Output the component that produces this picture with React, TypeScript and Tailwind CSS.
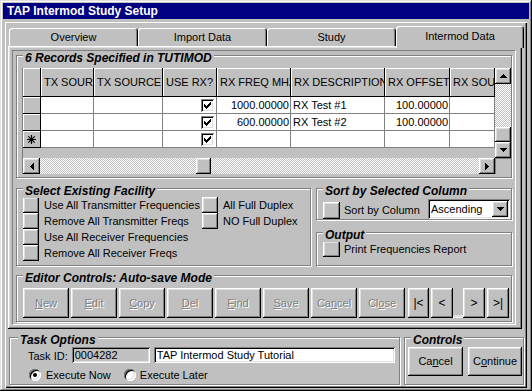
import React from "react";

const raised =
  "shadow-[inset_-1px_-1px_#000,inset_1px_1px_#fff,inset_-2px_-2px_#808080,inset_2px_2px_#dfdfdf]";
const sunken =
  "shadow-[inset_1px_1px_#808080,inset_-1px_-1px_#fff,inset_2px_2px_#000,inset_-2px_-2px_#dfdfdf]";
const dither =
  "bg-[repeating-conic-gradient(#fff_0_25%,#c0c0c0_0_50%)] bg-[length:2px_2px]";

function Arrow({ dir }: { dir: "up" | "down" | "left" | "right" }) {
  const d = {
    up: "M3 0h1v1h-1z M2 1h3v1h-3z M1 2h5v1h-5z M0 3h7v1h-7z",
    down: "M0 0h7v1h-7z M1 1h5v1h-5z M2 2h3v1h-3z M3 3h1v1h-1z",
    left: "M3 0h1v7h-1z M2 1h1v5h-1z M1 2h1v3h-1z M0 3h1v1h-1z",
    right: "M0 0h1v7h-1z M1 1h1v5h-1z M2 2h1v3h-1z M3 3h1v1h-1z",
  }[dir];
  const vert = dir === "up" || dir === "down";
  return (
    <svg
      width={vert ? 7 : 4}
      height={vert ? 4 : 7}
      viewBox={vert ? "0 0 7 4" : "0 0 4 7"}
      shapeRendering="crispEdges"
    >
      <path d={d} fill="#000" />
    </svg>
  );
}

function Check() {
  return (
    <div className={`w-[13px] h-[13px] bg-white flex items-center justify-center ${sunken}`}>
      <svg width="7" height="7" viewBox="0 0 7 7" shapeRendering="crispEdges">
        <path
          d="M6 0h1v1h-1z M5 1h2v1h-2z M0 2h1v1h-1z M4 2h3v1h-3z M0 3h2v1h-2z M3 3h3v1h-3z M0 4h5v1h-5z M1 5h3v1h-3z M2 6h1v1h-1z"
          fill="#000"
        />
      </svg>
    </div>
  );
}

function Group({
  title,
  className = "",
  titleLeft = "left-[6px]",
  children,
}: {
  title: string;
  className?: string;
  titleLeft?: string;
  children?: React.ReactNode;
}) {
  return (
    <div
      className={`relative shrink-0 border border-[#808080] shadow-[inset_1px_1px_#fff,1px_1px_#fff] ${className}`}
    >
      <span
        className={`absolute -top-[5px] ${titleLeft} bg-[#c0c0c0] px-[2px] text-[12px] leading-[14px] font-bold italic whitespace-nowrap`}
      >
        {title}
      </span>
      {children}
    </div>
  );
}

function SqBtn({ label }: { label: string }) {
  return (
    <div className="flex items-center h-[16px]">
      <div className={`w-[16px] h-[16px] shrink-0 ${raised}`} />
      <span className="ml-[5px] whitespace-nowrap">{label}</span>
    </div>
  );
}

function DataGrid() {
  const heads = ["TX SOUR", "TX SOURCE", "USE RX?", "RX FREQ MHZ", "RX DESCRIPTION", "RX OFFSET", "RX SOURCE"];
  const rows = [
    { star: false, freq: "1000.00000", desc: "RX Test #1", off: "100.00000" },
    { star: false, freq: "600.00000", desc: "RX Test #2", off: "100.00000" },
    { star: true, freq: "", desc: "", off: "" },
  ];
  const cell = "h-[17px] bg-white border-r border-b border-[#808080] overflow-hidden whitespace-nowrap flex items-center";

  return (
    <div className="flex h-[106px] border-l border-[#808080]">
      <div className="flex flex-col w-[472px]">
        <div className="grid grid-cols-[18px_53px_69px_54px_74px_94px_65px_45px]">
          <div className="h-[29px] border-r border-b border-black shadow-[inset_1px_1px_#fff]" />
          {heads.map((h) => (
            <div
              key={h}
              className="h-[29px] flex items-center pl-[3px] overflow-hidden whitespace-nowrap border-r border-b border-black shadow-[inset_1px_1px_#fff]"
            >
              {h}
            </div>
          ))}
          {rows.map((r, i) => (
            <React.Fragment key={i}>
              <div className="h-[17px] flex items-center justify-center border-r border-b border-black shadow-[inset_1px_1px_#fff]">
                {r.star && (
                  <svg width="9" height="9" viewBox="0 0 9 9">
                    <path d="M4.5 0V9 M0 4.5H9 M1.3 1.3L7.7 7.7 M7.7 1.3L1.3 7.7" stroke="#000" strokeWidth="1.2" />
                  </svg>
                )}
              </div>
              <div className={cell} />
              <div className={cell} />
              <div className={`${cell} justify-end pr-[2px]`}>
                <Check />
              </div>
              <div className={`${cell} justify-end pr-[1px]`}>{r.freq}</div>
              <div className={`${cell} pl-[2px]`}>{r.desc}</div>
              <div className={`${cell} justify-end pr-[1px]`}>{r.off}</div>
              <div className={cell} />
            </React.Fragment>
          ))}
        </div>
        <div className="flex-1" />
        <div className="flex h-[16px]">
          <div className={`w-[17px] flex items-center justify-center ${raised}`}>
            <Arrow dir="left" />
          </div>
          <div className={`w-[156px] ${dither}`} />
          <div className={`w-[15px] ${raised}`} />
          <div className={`flex-1 ${dither}`} />
          <div className={`w-[16px] flex items-center justify-center ${raised}`}>
            <Arrow dir="right" />
          </div>
        </div>
      </div>
      <div className="flex flex-col w-[16px]">
        <div className={`h-[16px] flex items-center justify-center ${raised}`}>
          <Arrow dir="up" />
        </div>
        <div className={`flex-1 ${dither}`} />
        <div className={`h-[15px] ${raised}`} />
        <div className={`h-[16px] flex items-center justify-center ${raised}`}>
          <Arrow dir="down" />
        </div>
        <div className="h-[16px] border-t border-l border-[#808080]" />
      </div>
    </div>
  );
}

function EdBtn({ children, className = "w-[46px]" }: { children: React.ReactNode; className?: string }) {
  return (
    <div
      className={`h-[30px] shrink-0 flex items-center justify-center text-[#808080] [text-shadow:1px_1px_0_#fff] ${raised} ${className}`}
    >
      {children}
    </div>
  );
}

function NavBtn({ children, className = "w-[22px]" }: { children: React.ReactNode; className?: string }) {
  return (
    <div className={`h-[30px] shrink-0 flex items-center justify-center text-[12px] ${raised} ${className}`}>
      {children}
    </div>
  );
}

function Radio({ on }: { on?: boolean }) {
  return (
    <div
      className={`w-[12px] h-[12px] rounded-full bg-white flex items-center justify-center ${sunken}`}
    >
      {on && <div className="w-[4px] h-[4px] rounded-full bg-black" />}
    </div>
  );
}

export default function App() {
  const tabs = ["Overview", "Import Data", "Study"];
  return (
    <div className="w-[532px] h-[391px] overflow-hidden bg-[#c0c0c0] p-[3px] font-['Liberation_Sans',Arial,sans-serif] text-[11px] leading-[13px] text-black shadow-[inset_-1px_-1px_#000,inset_1px_1px_#dfdfdf,inset_-2px_-2px_#808080,inset_2px_2px_#fff]">
      {/* title bar */}
      <div className="h-[16px] bg-[#000080] text-white font-bold text-[12px] leading-[16px] pl-[4px]">
        TAP Intermod Study Setup
      </div>

      {/* form body frame */}
      <div className="mt-[3px] mx-[2px] h-[366px] pl-[3px] pr-[5px] pt-[4px] shadow-[inset_1px_1px_#fff,inset_-1px_-1px_#000,inset_-2px_-2px_#808080]">
        {/* tabs */}
        <div className="flex items-end h-[20px] pl-[1px]">
          {tabs.map((t) => (
            <div
              key={t}
              className="shrink-0 w-[129px] h-[18px] rounded-t-[3px] flex items-center justify-center shadow-[inset_1px_1px_#fff,inset_-1px_0_#000,inset_-2px_0_#808080]"
            >
              {t}
            </div>
          ))}
          <div className="relative z-10 shrink-0 w-[128px] h-[22px] -mb-[2px] rounded-t-[3px] bg-[#c0c0c0] flex justify-center pt-[4px] shadow-[inset_1px_1px_#fff,inset_-1px_0_#000,inset_-2px_0_#808080]">
            Intermod Data
          </div>
        </div>

        {/* tab panel */}
        <div className={`h-[283px] pt-[4px] pl-[4px] pr-[6px] pb-[4px] ${raised}`}>
          <div className="h-full flex flex-col border border-t-[#808080] border-l-[#808080] border-b-white border-r-white pt-[4px] px-[3px]">
            <Group title="6 Records Specified in TUTIMOD" className="pt-[12px] pl-[5px] pb-[3px]">
              <DataGrid />
            </Group>

            <div className="flex mt-[10px] gap-[5px]">
              <Group title="Select Existing Facility" className="w-[295px] h-[78px] pt-[8px] pl-[6px] flex">
                <div className="flex flex-col w-[179px]">
                  <SqBtn label="Use All Transmitter Frequencies" />
                  <SqBtn label="Remove All Transmitter Freqs" />
                  <SqBtn label="Use All Receiver Frequencies" />
                  <SqBtn label="Remove All Receiver Freqs" />
                </div>
                <div className="flex flex-col">
                  <SqBtn label="All Full Duplex" />
                  <SqBtn label="NO Full Duplex" />
                </div>
              </Group>

              <div className="flex flex-col flex-1 gap-[12px]">
                <Group title="Sort by Selected Column" className="h-[32px] pt-[9px] pl-[6px] pr-[1px] flex items-end">
                  <div className={`w-[17px] h-[17px] shrink-0 ${raised}`} />
                  <span className="ml-[4px] mb-[2px]">Sort by Column</span>
                  <div className={`ml-auto w-[82px] h-[20px] bg-white flex items-center pl-[3px] pr-[2px] ${sunken}`}>
                    <span className="flex-1">Ascending</span>
                    <div className={`w-[16px] h-[16px] bg-[#c0c0c0] flex items-center justify-center ${raised}`}>
                      <Arrow dir="down" />
                    </div>
                  </div>
                </Group>
                <Group title="Output" className="flex-1 pt-[8px] pl-[6px]">
                  <div className="flex items-center">
                    <div className={`w-[17px] h-[16px] shrink-0 ${raised}`} />
                    <span className="ml-[4px]">Print Frequencies Report</span>
                  </div>
                </Group>
              </div>
            </div>

            <Group title="Editor Controls: Auto-save Mode" className="mt-[9px] h-[47px] pt-[12px] pl-[6px] flex gap-[2px]">
              <EdBtn><span className="underline">N</span>ew</EdBtn>
              <EdBtn><span className="underline">E</span>dit</EdBtn>
              <EdBtn><span className="underline">C</span>opy</EdBtn>
              <EdBtn><span className="underline">D</span>el</EdBtn>
              <EdBtn><span className="underline">F</span>ind</EdBtn>
              <EdBtn><span className="underline">S</span>ave</EdBtn>
              <EdBtn>Ca<span className="underline">n</span>cel</EdBtn>
              <EdBtn>Cl<span className="underline">o</span>se</EdBtn>
              <NavBtn className="w-[21px] ml-[1px]">|&lt;</NavBtn>
              <div className="flex">
                <NavBtn>&lt;</NavBtn>
                <div className="w-[10px] h-[30px] border-b border-white shadow-[inset_0_-2px_#dfdfdf]" />
                <NavBtn>&gt;</NavBtn>
              </div>
              <NavBtn>&gt;|</NavBtn>
            </Group>
          </div>
        </div>

        {/* bottom */}
        <div className="flex mt-[8px] ml-[1px] h-[48px]">
          <Group title="Task Options" titleLeft="left-[8px]" className="w-[391px] pt-[9px] pl-[18px]">
            <div className="flex items-center h-[16px]">
              <span className="mt-[3px]">Task ID:</span>
              <div className={`ml-[4px] w-[78px] h-[16px] pl-[3px] flex items-center ${sunken}`}>0004282</div>
              <div className={`ml-[4px] w-[241px] h-[16px] pl-[3px] bg-white flex items-center ${sunken}`}>
                TAP Intermod Study Tutorial
              </div>
            </div>
            <div className="flex items-center h-[14px] mt-[5px] pl-[1px]">
              <Radio on />
              <span className="ml-[5px]">Execute Now</span>
              <div className="ml-[13px]">
                <Radio />
              </div>
              <span className="ml-[4px]">Execute Later</span>
            </div>
          </Group>
          <Group title="Controls" className="ml-[4px] w-[120px] pt-[9px] pl-[3px] flex gap-[5px]">
            <div className={`w-[55px] h-[29px] flex items-center justify-center ${raised}`}>
              Ca<span className="underline">n</span>cel
            </div>
            <div className={`w-[54px] h-[29px] flex items-center justify-center ${raised}`}>
              C<span className="underline">o</span>ntinue
            </div>
          </Group>
        </div>
      </div>
    </div>
  );
}
